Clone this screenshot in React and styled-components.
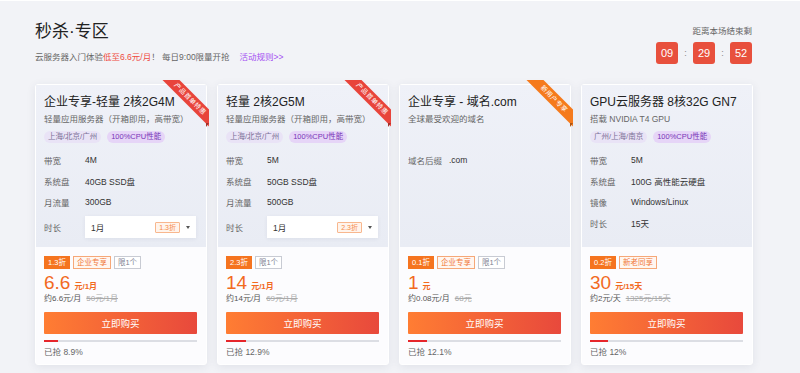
import React from 'react'
import styled, { createGlobalStyle } from 'styled-components'

const GlobalStyle = createGlobalStyle`
  body {
    margin: 0;
    background: #f2f3f7;
    font-family: "Liberation Sans", "Noto Sans CJK SC", sans-serif;
    color: #333;
  }
`

const Page = styled.div`
  box-sizing: border-box;
  min-height: 373px;
  border-top: 1px solid #fff;
  padding: 20px 0 0 35px;
  overflow: hidden;
`

const Header = styled.header`
  width: 717px;
  height: 43px;
  display: flex;
  justify-content: space-between;
  align-items: flex-start;
`

const Title = styled.h1`
  margin: 0;
  font-size: 17px;
  line-height: 22px;
  font-weight: normal;
  color: #222;
`

const Intro = styled.p`
  margin: 8px 0 0;
  font-size: 8.5px;
  line-height: 12px;
  color: #666;
`

const Hot = styled.span`
  color: #ef4b3f;
`

const RuleLink = styled.a`
  margin-left: 10px;
  color: #a44ef2;
  text-decoration: none;
`

const Countdown = styled.div`
  padding-top: 4px;
  display: flex;
  flex-direction: column;
  align-items: flex-end;
`

const CountdownLabel = styled.span`
  font-size: 8.5px;
  line-height: 12px;
  color: #666;
`

const Clock = styled.div`
  margin-top: 5px;
  display: flex;
  align-items: center;
`

const TimeBox = styled.span`
  width: 22px;
  height: 22px;
  border-radius: 3px;
  background: #e8503d;
  color: #fff;
  font-size: 11px;
  display: flex;
  align-items: center;
  justify-content: center;
`

const Colon = styled.span`
  width: 15px;
  text-align: center;
  font-size: 9px;
  color: #888;
`

const Cards = styled.div`
  margin-top: 20px;
  display: grid;
  grid-template-columns: repeat(4, 172px);
  column-gap: 10px;
`

const Card = styled.div`
  position: relative;
  box-sizing: border-box;
  display: flex;
  flex-direction: column;
  border: 1px solid #fff;
  border-radius: 3px;
  background: #fcfcfe;
  box-shadow: 0 2px 10px rgba(40, 50, 90, 0.09);
`

const CardTop = styled.div`
  flex: 1;
  padding: 9px 9px 9px 8px;
  background: linear-gradient(180deg, #eff1f8 0%, #e9ecf4 100%);
`

const CardName = styled.h2`
  margin: 0;
  font-size: 12px;
  line-height: 16px;
  font-weight: normal;
  color: #222;
  white-space: nowrap;
`

const CardDesc = styled.p`
  margin: 3px 0 0;
  font-size: 8.5px;
  line-height: 12px;
  color: #666;
  white-space: nowrap;
`

const Pills = styled.div`
  margin-top: 6px;
  height: 12px;
  display: flex;
  gap: 6px;
`

const Pill = styled.span`
  height: 12px;
  padding: 0 4px;
  border-radius: 6px;
  font-size: 7.5px;
  line-height: 12px;
  background: ${p => (p.$strong ? '#e6d5f7' : '#e9e3f6')};
  color: ${p => (p.$strong ? '#7a35b8' : '#7b7097')};
`

const Specs = styled.div`
  margin-top: 6px;
`

const SpecRow = styled.div`
  height: 21px;
  display: flex;
  align-items: center;
  font-size: 8.5px;
`

const SpecLabel = styled.span`
  width: 41px;
  flex-shrink: 0;
  color: #666;
`

const SpecValue = styled.span`
  color: #333;
  white-space: nowrap;
`

const SelectRow = styled.div`
  margin-top: 4px;
  display: flex;
  align-items: center;
  font-size: 8.5px;
`

const Select = styled.div`
  box-sizing: border-box;
  width: 111px;
  height: 22px;
  padding: 0 6px;
  display: flex;
  align-items: center;
  background: #fff;
  box-shadow: 0 1px 4px rgba(40, 50, 90, 0.07);
  color: #333;
`

const SelectText = styled.span`
  flex: 1;
`

const SelectTag = styled.span`
  height: 9px;
  padding: 0 3px;
  border: 1px solid #f8b78e;
  border-radius: 1px;
  background: #fff4ec;
  color: #f58a4a;
  font-size: 7px;
  line-height: 9px;
`

const Caret = styled.span`
  margin-left: 6px;
  border-top: 3px solid #555;
  border-left: 2.5px solid transparent;
  border-right: 2.5px solid transparent;
`

const CardBottom = styled.div`
  padding: 9px 9px 6px 8px;
`

const Badges = styled.div`
  display: flex;
  gap: 3px;
`

const Badge = styled.span`
  box-sizing: border-box;
  height: 13px;
  padding: 0 3px;
  font-size: 7.5px;
  line-height: 11px;
  border: 1px solid
    ${p => (p.$kind === 'solid' ? '#f5741f' : p.$kind === 'orange' ? '#f6a878' : '#c8cbd3')};
  background: ${p => (p.$kind === 'solid' ? '#f5741f' : p.$kind === 'orange' ? '#fff6f0' : '#fff')};
  color: ${p => (p.$kind === 'solid' ? '#fff' : p.$kind === 'orange' ? '#f0783a' : '#7b8090')};
`

const PriceRow = styled.div`
  margin-top: 4px;
  height: 20px;
  display: flex;
  align-items: baseline;
  color: #f26a1e;
`

const PriceNum = styled.span`
  font-size: 19px;
  line-height: 20px;
`

const PriceUnit = styled.span`
  margin-left: 4px;
  font-size: 8px;
  font-weight: bold;
`

const PriceNote = styled.div`
  height: 12px;
  font-size: 8px;
  line-height: 12px;
  color: #555;
`

const OldPrice = styled.span`
  margin-left: 5px;
  color: #aaa;
  text-decoration: line-through;
`

const BuyButton = styled.button`
  margin-top: 7px;
  width: 100%;
  height: 22px;
  border: none;
  border-radius: 1px;
  background: linear-gradient(90deg, #ff7d33 0%, #e8493c 100%);
  color: #fff;
  font-family: inherit;
  font-size: 9.5px;
  cursor: pointer;
`

const Progress = styled.div`
  margin-top: 6px;
  height: 2px;
  background: #dcdee4;
`

const ProgressFill = styled.div`
  height: 100%;
  background: #e6262b;
`

const Sold = styled.div`
  margin-top: 4px;
  font-size: 8.5px;
  line-height: 12px;
  color: #666;
`

const RibbonCorner = styled.div`
  position: absolute;
  top: -5px;
  right: -3px;
  width: 48px;
  height: 48px;
  overflow: hidden;
  pointer-events: none;
`

const RibbonBand = styled.div`
  position: absolute;
  left: -6px;
  top: 13px;
  width: 70px;
  height: 12px;
  transform: rotate(45deg);
  background: ${p => p.$color};
  color: #fff;
  font-size: 6.5px;
  line-height: 12px;
  text-align: center;
  letter-spacing: 0.5px;
`

const RibbonFold = styled.div`
  position: absolute;
  right: -3px;
  top: 38px;
  border-top: 4px solid ${p => p.$color};
  border-right: 3px solid transparent;
  filter: brightness(0.7);
`

const cards = [
  {
    name: '企业专享-轻量 2核2G4M',
    desc: '轻量应用服务器（开箱即用，高带宽）',
    pills: ['上海/北京/广州', '100%CPU性能'],
    specs: [['带宽', '4M'], ['系统盘', '40GB SSD盘'], ['月流量', '300GB']],
    select: { value: '1月', tag: '1.3折' },
    ribbon: { text: '产品首单特惠', color: '#e8443b' },
    badges: [['1.3折', 'solid'], ['企业专享', 'orange'], ['限1个', 'gray']],
    price: '6.6', unit: '元/1月', note: '约6.6元/月', old: '50元/1月', sold: 8.9,
  },
  {
    name: '轻量 2核2G5M',
    desc: '轻量应用服务器（开箱即用，高带宽）',
    pills: ['上海/北京/广州', '100%CPU性能'],
    specs: [['带宽', '5M'], ['系统盘', '50GB SSD盘'], ['月流量', '500GB']],
    select: { value: '1月', tag: '2.3折' },
    ribbon: { text: '产品首单特惠', color: '#e8443b' },
    badges: [['2.3折', 'solid'], ['限1个', 'gray']],
    price: '14', unit: '元/1月', note: '约14元/月', old: '69元/1月', sold: 12.9,
  },
  {
    name: '企业专享 - 域名.com',
    desc: '全球最受欢迎的域名',
    pills: [],
    specs: [['域名后缀', '.com']],
    ribbon: { text: '新用户专享', color: '#f57a1c' },
    badges: [['0.1折', 'solid'], ['企业专享', 'orange'], ['限1个', 'gray']],
    price: '1', unit: '元', note: '约0.08元/月', old: '68元', sold: 12.1,
  },
  {
    name: 'GPU云服务器 8核32G GN7',
    desc: '搭载 NVIDIA T4 GPU',
    pills: ['广州/上海/南京', '100%CPU性能'],
    specs: [['带宽', '5M'], ['系统盘', '100G 高性能云硬盘'], ['镜像', 'Windows/Linux'], ['时长', '15天']],
    badges: [['0.2折', 'solid'], ['新老同享', 'orange']],
    price: '30', unit: '元/15天', note: '约2元/天', old: '1325元/15天', sold: 12,
  },
]

function Ribbon({ text, color }) {
  return (
    <>
      <RibbonCorner>
        <RibbonBand $color={color}>{text}</RibbonBand>
      </RibbonCorner>
      <RibbonFold $color={color} />
    </>
  )
}

function ProductCard({ item }) {
  return (
    <Card>
      <CardTop>
        <CardName>{item.name}</CardName>
        <CardDesc>{item.desc}</CardDesc>
        <Pills>
          {item.pills.map((p, i) => (
            <Pill key={p} $strong={i === 1}>{p}</Pill>
          ))}
        </Pills>
        <Specs>
          {item.specs.map(([label, value]) => (
            <SpecRow key={label}>
              <SpecLabel>{label}</SpecLabel>
              <SpecValue>{value}</SpecValue>
            </SpecRow>
          ))}
        </Specs>
        {item.select && (
          <SelectRow>
            <SpecLabel>时长</SpecLabel>
            <Select>
              <SelectText>{item.select.value}</SelectText>
              <SelectTag>{item.select.tag}</SelectTag>
              <Caret />
            </Select>
          </SelectRow>
        )}
      </CardTop>
      <CardBottom>
        <Badges>
          {item.badges.map(([text, kind]) => (
            <Badge key={text} $kind={kind}>{text}</Badge>
          ))}
        </Badges>
        <PriceRow>
          <PriceNum>{item.price}</PriceNum>
          <PriceUnit>{item.unit}</PriceUnit>
        </PriceRow>
        <PriceNote>
          {item.note}
          <OldPrice>{item.old}</OldPrice>
        </PriceNote>
        <BuyButton>立即购买</BuyButton>
        <Progress>
          <ProgressFill style={{ width: `${item.sold}%` }} />
        </Progress>
        <Sold>已抢 {item.sold}%</Sold>
      </CardBottom>
      {item.ribbon && <Ribbon {...item.ribbon} />}
    </Card>
  )
}

export default function App() {
  return (
    <Page>
      <GlobalStyle />
      <Header>
        <div>
          <Title>秒杀·专区</Title>
          <Intro>
            云服务器入门体验<Hot>低至6.6元/月</Hot>！ 每日9:00限量开抢
            <RuleLink href="#">活动规则&gt;&gt;</RuleLink>
          </Intro>
        </div>
        <Countdown>
          <CountdownLabel>距离本场结束剩</CountdownLabel>
          <Clock>
            <TimeBox>09</TimeBox>
            <Colon>:</Colon>
            <TimeBox>29</TimeBox>
            <Colon>:</Colon>
            <TimeBox>52</TimeBox>
          </Clock>
        </Countdown>
      </Header>
      <Cards>
        {cards.map(item => (
          <ProductCard key={item.name} item={item} />
        ))}
      </Cards>
    </Page>
  )
}
